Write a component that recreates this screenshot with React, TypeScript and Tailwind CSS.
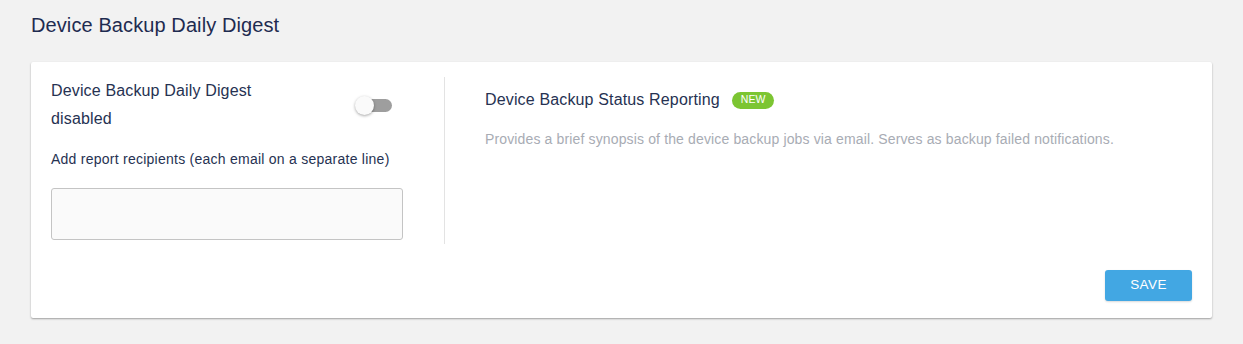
export default function App() {
  return (
    <div className="min-h-screen bg-[#f2f2f2] px-[31px] pt-[11px] font-['Liberation_Sans',Arial,sans-serif]">
      <h1 className="text-[20px] leading-[28px] tracking-[0.1px] text-[#1e2b50]">Device Backup Daily Digest</h1>

      <div className="mt-[23px] rounded-[2px] bg-white px-5 pt-[15px] pb-[17px] shadow-[0_1px_2px_rgba(0,0,0,0.35)]">
        <div className="flex">
          <div className="w-[394px] border-r border-[#e3e3e3] pb-1">
            <div className="w-[352px]">
              <div className="flex items-center justify-between">
                <div className="text-[16px] leading-[28px] tracking-[0.15px] text-[#263252]">
                  <div>Device Backup Daily Digest</div>
                  <div>disabled</div>
                </div>
                <button className="relative mr-[11px] h-[13px] w-[34px] rounded-full bg-[#9e9e9e]">
                  <span className="absolute -left-[3px] -top-[3px] h-[19px] w-[19px] rounded-full bg-[#fafafa] shadow-[0_1px_3px_rgba(0,0,0,0.35)]" />
                </button>
              </div>
              <p className="mt-4 text-[14px] leading-[20px] tracking-[0.25px] text-[#263252]">
                Add report recipients (each email on a separate line)
              </p>
              <textarea className="mt-[19px] block h-[52px] w-full resize-none rounded-[3px] border border-[#c4c4c4] bg-[#fafafa] outline-none" />
            </div>
          </div>

          <div className="pl-[40px] pt-[11px]">
            <div className="flex items-center">
              <span className="text-[16px] leading-[24px] tracking-[0.15px] text-[#263252]">Device Backup Status Reporting</span>
              <span className="ml-[12px] flex h-[17px] items-center rounded-full bg-[#7cc532] px-[9px] text-[10.5px] text-white">
                NEW
              </span>
            </div>
            <p className="mt-[17px] text-[14px] leading-[20px] tracking-[0.14px] text-[#a8acb4]">
              Provides a brief synopsis of the device backup jobs via email. Serves as backup failed notifications.
            </p>
          </div>
        </div>

        <div className="mt-[26px] flex justify-end">
          <button className="h-[31px] w-[87px] rounded-[3px] bg-[#42a7e3] text-[13.5px] uppercase tracking-[0.4px] text-white shadow-[0_1px_2px_rgba(0,0,0,0.15)]">
            Save
          </button>
        </div>
      </div>
    </div>
  );
}
